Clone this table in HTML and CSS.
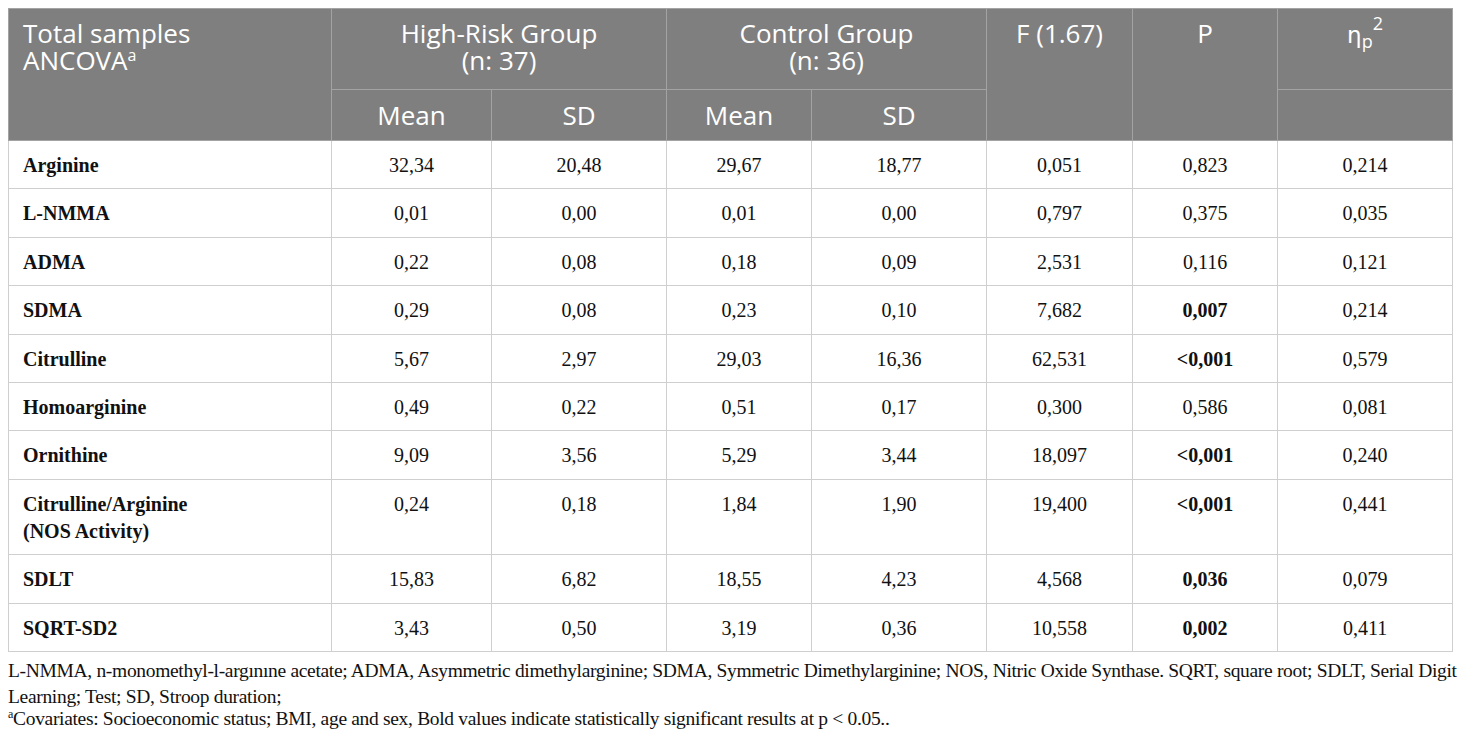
FILE: index.html
```html
<!DOCTYPE html>
<html>
<head>
<meta charset="utf-8">
<link rel="stylesheet" href="styles.css">
</head>
<body>
<table class="data">
  <colgroup>
    <col class="c-label"><col class="c-m1"><col class="c-s1"><col class="c-m2"><col class="c-s2"><col class="c-f"><col class="c-p"><col class="c-eta">
  </colgroup>
  <thead>
    <tr class="h1">
      <th rowspan="2" class="left">Total samples<br>ANCOVA<sup class="sup-a">a</sup></th>
      <th colspan="2">High-Risk Group<br>(n: 37)</th>
      <th colspan="2">Control Group<br>(n: 36)</th>
      <th rowspan="2">F (1.67)</th>
      <th rowspan="2">P</th>
      <th><span class="eta">η</span><sub class="sub-p">p</sub><sup class="sup-2">2</sup></th>
    </tr>
    <tr class="h2">
      <th>Mean</th><th>SD</th><th>Mean</th><th>SD</th><th></th>
    </tr>
  </thead>
  <tbody>
    <tr><td class="lbl">Arginine</td><td>32,34</td><td>20,48</td><td>29,67</td><td>18,77</td><td>0,051</td><td>0,823</td><td>0,214</td></tr>
    <tr><td class="lbl">L-NMMA</td><td>0,01</td><td>0,00</td><td>0,01</td><td>0,00</td><td>0,797</td><td>0,375</td><td>0,035</td></tr>
    <tr><td class="lbl">ADMA</td><td>0,22</td><td>0,08</td><td>0,18</td><td>0,09</td><td>2,531</td><td>0,116</td><td>0,121</td></tr>
    <tr><td class="lbl">SDMA</td><td>0,29</td><td>0,08</td><td>0,23</td><td>0,10</td><td>7,682</td><td class="b">0,007</td><td>0,214</td></tr>
    <tr><td class="lbl">Citrulline</td><td>5,67</td><td>2,97</td><td>29,03</td><td>16,36</td><td>62,531</td><td class="b">&lt;0,001</td><td>0,579</td></tr>
    <tr><td class="lbl">Homoarginine</td><td>0,49</td><td>0,22</td><td>0,51</td><td>0,17</td><td>0,300</td><td>0,586</td><td>0,081</td></tr>
    <tr><td class="lbl">Ornithine</td><td>9,09</td><td>3,56</td><td>5,29</td><td>3,44</td><td>18,097</td><td class="b">&lt;0,001</td><td>0,240</td></tr>
    <tr><td class="lbl">Citrulline/Arginine<br>(NOS Activity)</td><td>0,24</td><td>0,18</td><td>1,84</td><td>1,90</td><td>19,400</td><td class="b">&lt;0,001</td><td>0,441</td></tr>
    <tr><td class="lbl">SDLT</td><td>15,83</td><td>6,82</td><td>18,55</td><td>4,23</td><td>4,568</td><td class="b">0,036</td><td>0,079</td></tr>
    <tr><td class="lbl">SQRT-SD2</td><td>3,43</td><td>0,50</td><td>3,19</td><td>0,36</td><td>10,558</td><td class="b">0,002</td><td>0,411</td></tr>
  </tbody>
</table>
<div class="notes">
  <p class="note">L-NMMA, n-monomethyl-l-argınıne acetate; ADMA, Asymmetric dimethylarginine; SDMA, Symmetric Dimethylarginine; NOS, Nitric Oxide Synthase. SQRT, square root; SDLT, Serial Digit Learning; Test; SD, Stroop duration;</p>
  <p class="note note-fn"><sup class="fn">a</sup>Covariates: Socioeconomic status; BMI, age and sex, Bold values indicate statistically significant results at p &lt; 0.05..</p>
</div>
</body>
</html>
```
FILE: styles.css
```css
html, body {
  margin: 0;
  padding: 0;
  background: #ffffff;
}
body {
  padding: 8px;
}
.data {
  width: 1444px;
  table-layout: fixed;
  border-collapse: collapse;
  border: 1px solid #c8c8c8;
}
.c-label { width: 323px; }
.c-m1 { width: 160px; }
.c-s1 { width: 175px; }
.c-m2 { width: 145px; }
.c-s2 { width: 175px; }
.c-f { width: 146px; }
.c-p { width: 145px; }
.c-eta { width: 175px; }

.data th {
  background: #7f7f7f;
  color: #ffffff;
  font-family: "Open Sans", "Noto Sans", sans-serif;
  font-weight: 400;
  font-size: 26px;
  line-height: 27px;
  text-align: center;
  border: 1px solid #a3a3a3;
  padding: 0 10px;
}
.h1 th {
  height: 69px;
  vertical-align: top;
  padding-top: 11px;
}
.h2 th {
  height: 50px;
  vertical-align: middle;
}
.data th.left {
  text-align: left;
  padding-left: 14px;
}
.sup-a {
  font-size: 16px;
  line-height: 0;
  vertical-align: 9px;
}
.eta {
  font-family: "DejaVu Sans", sans-serif;
  font-size: 23px;
}
.sub-p {
  font-size: 18px;
  line-height: 0;
  vertical-align: -5px;
}
.sup-2 {
  font-size: 18px;
  line-height: 0;
  vertical-align: 13px;
}

.data td {
  font-family: "Liberation Serif", "Times New Roman", serif;
  font-size: 20px;
  line-height: 27px;
  color: #111111;
  text-align: center;
  vertical-align: top;
  border: 1px solid #cfcfcf;
  padding: 11px 10px 9.4px;
}
.data td.lbl {
  text-align: left;
  font-weight: 700;
  padding-left: 14px;
}
.data td.b {
  font-weight: 700;
}

.notes {
  margin-top: 6px;
  margin-right: -6px;
  font-family: "Liberation Serif", "Times New Roman", serif;
  font-size: 19.5px;
  letter-spacing: -0.32px;
  color: #111111;
}
.note {
  margin: 0;
  line-height: 26px;
}
.note-fn {
  margin-top: -4px;
}
.fn {
  font-size: 12px;
  line-height: 0;
  vertical-align: 7px;
}
```
